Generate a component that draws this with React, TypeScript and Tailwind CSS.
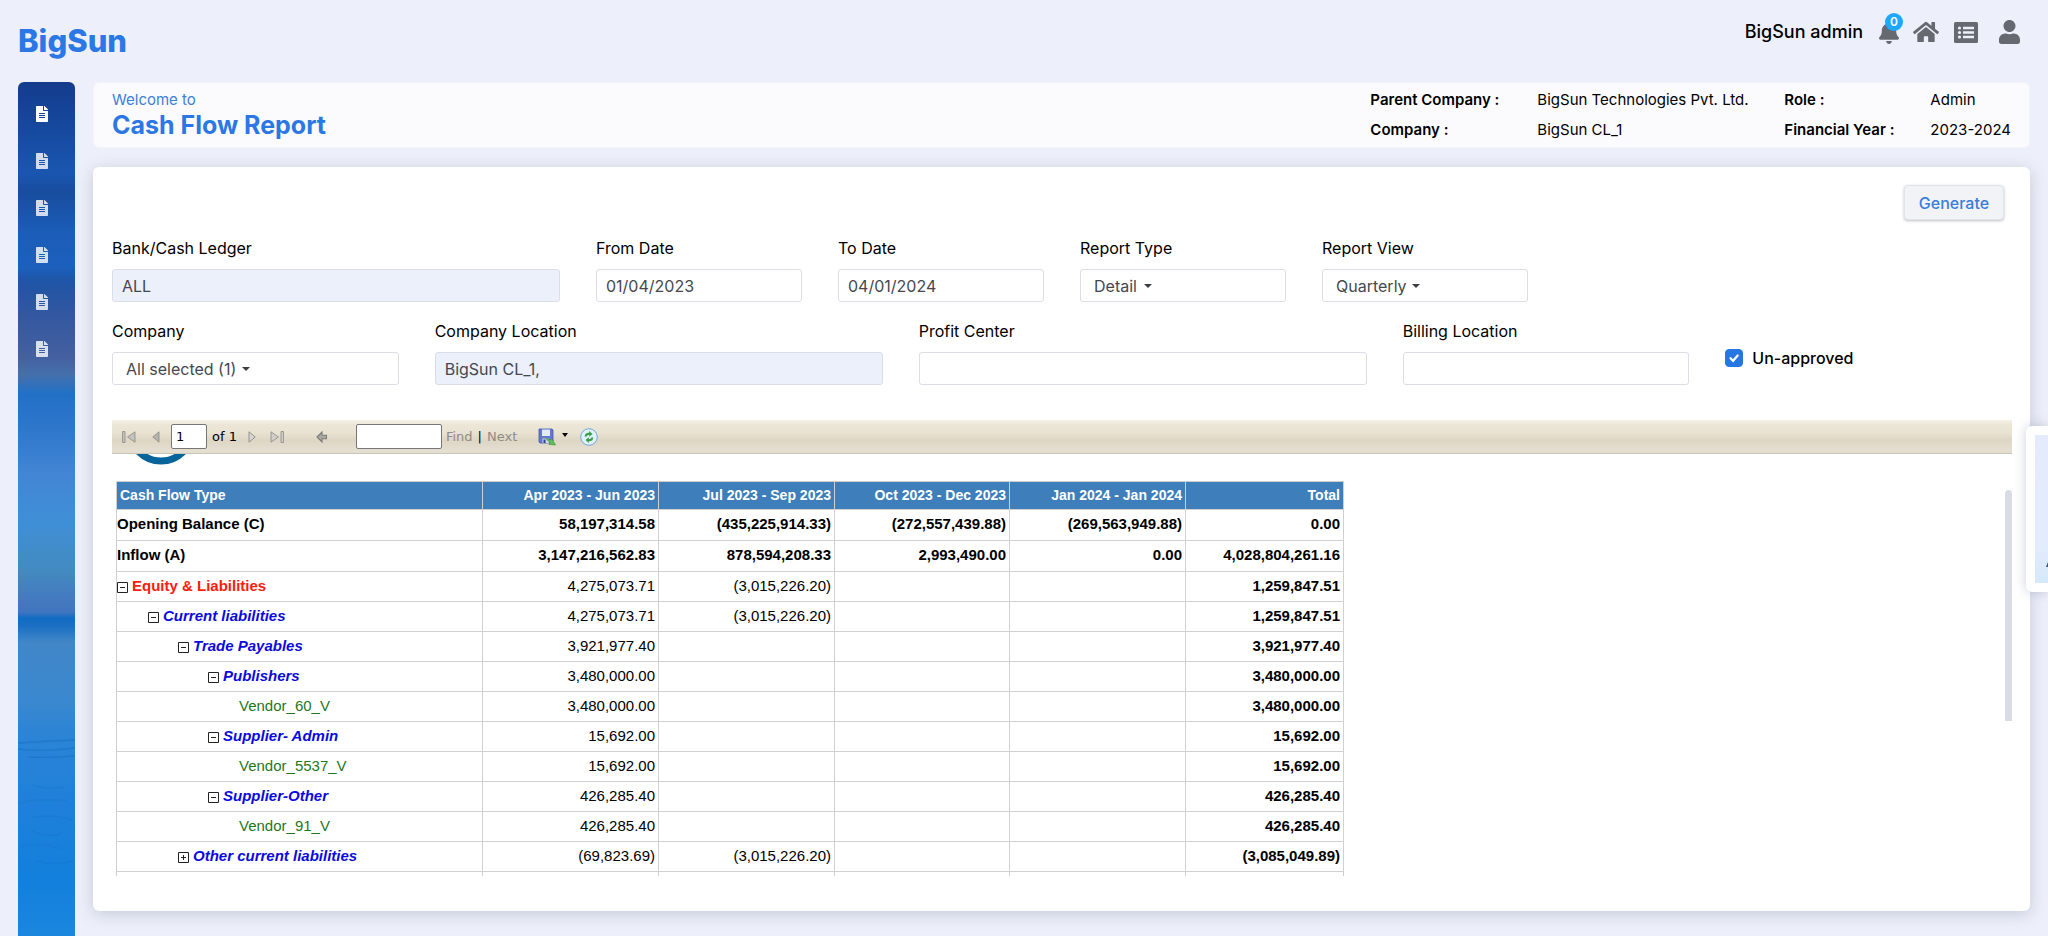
import { FaBell, FaFileAlt, FaHome, FaUser } from 'react-icons/fa';

type Level = 'total' | 'group' | 'sub' | 'vendor';

interface ReportRow {
  name: string;
  level: Level;
  indent?: string;
  open?: boolean;
  values: string[];
}

const columns = [
  'Apr 2023 - Jun 2023',
  'Jul 2023 - Sep 2023',
  'Oct 2023 - Dec 2023',
  'Jan 2024 - Jan 2024',
  'Total',
];

const rows: ReportRow[] = [
  { name: 'Opening Balance (C)', level: 'total', values: ['58,197,314.58', '(435,225,914.33)', '(272,557,439.88)', '(269,563,949.88)', '0.00'] },
  { name: 'Inflow (A)', level: 'total', values: ['3,147,216,562.83', '878,594,208.33', '2,993,490.00', '0.00', '4,028,804,261.16'] },
  { name: 'Equity & Liabilities', level: 'group', open: true, values: ['4,275,073.71', '(3,015,226.20)', '', '', '1,259,847.51'] },
  { name: 'Current liabilities', level: 'sub', indent: 'pl-[31px]', open: true, values: ['4,275,073.71', '(3,015,226.20)', '', '', '1,259,847.51'] },
  { name: 'Trade Payables', level: 'sub', indent: 'pl-[61px]', open: true, values: ['3,921,977.40', '', '', '', '3,921,977.40'] },
  { name: 'Publishers', level: 'sub', indent: 'pl-[91px]', open: true, values: ['3,480,000.00', '', '', '', '3,480,000.00'] },
  { name: 'Vendor_60_V', level: 'vendor', indent: 'pl-[122px]', values: ['3,480,000.00', '', '', '', '3,480,000.00'] },
  { name: 'Supplier- Admin', level: 'sub', indent: 'pl-[91px]', open: true, values: ['15,692.00', '', '', '', '15,692.00'] },
  { name: 'Vendor_5537_V', level: 'vendor', indent: 'pl-[122px]', values: ['15,692.00', '', '', '', '15,692.00'] },
  { name: 'Supplier-Other', level: 'sub', indent: 'pl-[91px]', open: true, values: ['426,285.40', '', '', '', '426,285.40'] },
  { name: 'Vendor_91_V', level: 'vendor', indent: 'pl-[122px]', values: ['426,285.40', '', '', '', '426,285.40'] },
  { name: 'Other current liabilities', level: 'sub', indent: 'pl-[61px]', open: false, values: ['(69,823.69)', '(3,015,226.20)', '', '', '(3,085,049.89)'] },
];

const nameStyles: Record<Level, string> = {
  total: 'font-bold text-black',
  group: 'font-bold text-[#fb1c0c]',
  sub: 'font-bold italic text-[#0a0ae0]',
  vendor: 'text-[#1e781e]',
};

const fieldBox =
  'block h-[33px] w-full rounded-[3px] border border-[#dcdde6] px-[9px] text-base text-[#45484f] outline-none';

const TextField = ({ id, label, value = '', span, filled = false }: { id: string; label: string; value?: string; span: string; filled?: boolean }) => (
  <div className={span}>
    <label htmlFor={id} className="mb-[9px] block text-base leading-6 text-black">
      {label}
    </label>
    <input id={id} type="text" defaultValue={value} className={`${fieldBox} ${filled ? 'bg-[#ebf0fb]' : 'bg-white'}`} />
  </div>
);

const SelectField = ({ id, label, value, span, caret }: { id: string; label: string; value: string; span: string; caret: string }) => (
  <div className={span}>
    <label htmlFor={id} className="mb-[9px] block text-base leading-6 text-black">
      {label}
    </label>
    <div className="relative">
      <select id={id} className={`${fieldBox} appearance-none bg-white pl-[13px]`}>
        <option>{value}</option>
      </select>
      <svg viewBox="0 0 8 4" className={`pointer-events-none absolute top-[15px] h-1 w-2 ${caret}`}>
        <path d="M0 0h8L4 4z" fill="#3a3d44" />
      </svg>
    </div>
  </div>
);

const Toggle = ({ open }: { open: boolean }) => (
  <button type="button" aria-label={open ? 'Collapse' : 'Expand'} className="mr-1 inline-block align-[-2px]">
    <svg viewBox="0 0 11 11" className="h-[11px] w-[11px]" fill="none" stroke="#222">
      <path d="M.5.5h10v10H.5z M3 5.500h5" />
      {!open && <path d="M5.500 3v5" />}
    </svg>
  </button>
);

const Sidebar = () => (
  <nav className="w-[57px] shrink-0 rounded-t-md bg-[linear-gradient(180deg,#143c8c_0px,#15479c_40px,#1a56b0_90px,#184d9f_110px,#1b5db8_150px,#1c60bd_185px,#1f54a5_200px,#3458a0_235px,#44609f_275px,#4570ab_292px,#2270c6_312px,#2f78cc_350px,#4285d4_390px,#3f8fd6_440px,#438ac0_490px,#4478bf_520px,#4076bf_530px,#126bc2_536px,#1b6fc4_544px,#4187c8_560px,#3a88cf_620px,#2b84d6_655px,#1f80da_720px,#1280dc_800px,#1c86df_854px)]">
    <ul className="flex flex-col items-center gap-[31px] pr-[9px] pt-6">
      {[0, 1, 2, 3, 4, 5].map((item) => (
        <li key={item} className="h-4">
          <a href="#report" aria-label="Report" className={item === 0 ? 'text-white' : 'text-white/80'}>
            <FaFileAlt className="h-4 w-[12px]" />
          </a>
        </li>
      ))}
    </ul>
    {/* faint water ripples near the bottom */}
    <svg viewBox="0 0 57 140" className="mt-[382px] h-[140px] w-[57px]" fill="none" stroke="#1569ba" strokeOpacity=".4" strokeWidth="1.500">
      <path d="M0 4q28 -2 57 -3M0 10q24 3 57 -1M10 18q20 1 47 -1" />
      <path strokeOpacity=".2" d="M14 46q18 5 33 2M0 64q24 -6 48 -2M15 78q18 -3 40 3M14 92q16 8 30 2M2 108q22 -6 40 2M18 122q18 5 38 0" />
    </svg>
  </nav>
);

const ReportToolbar = () => (
  <div className="flex h-[34px] items-center border-b border-[#c9c6ba] bg-[linear-gradient(180deg,#f4f2e8_0%,#ebe6d6_14%,#e8e2d1_40%,#ddd6c4_62%,#e4ded0_90%)] pl-[10px] text-[13px] text-black [font-family:'DejaVu_Sans',sans-serif]">
    <button type="button" aria-label="First page" className="w-[14px]">
      <svg viewBox="0 0 14 12" className="h-3 w-[14px]" fill="#c4c2bd" stroke="#8e8c87" strokeWidth=".8">
        <path d="M.5.5h2.500v11h-2.500z M13 .8v10.400L5.500 6z" />
      </svg>
    </button>
    <button type="button" aria-label="Previous page" className="ml-4 w-2">
      <svg viewBox="0 0 8 12" className="h-3 w-2" fill="#b5b3ae" stroke="#8e8c87" strokeWidth=".8">
        <path d="M7 .8v10.400L.8 6z" />
      </svg>
    </button>
    <input aria-label="Current page" defaultValue="1" className="ml-[11px] h-[25px] w-[36px] rounded-[2px] border border-[#767676] bg-white px-1 text-[13px]" />
    <span className="ml-[5px]">of 1</span>
    <button type="button" aria-label="Next page" className="ml-[11px] w-2">
      <svg viewBox="0 0 8 12" className="h-3 w-2" fill="#d8d6d0" stroke="#8e8c87" strokeWidth=".9">
        <path d="M1 .8v10.400L7.200 6z" />
      </svg>
    </button>
    <button type="button" aria-label="Last page" className="ml-[14px] w-[14px]">
      <svg viewBox="0 0 14 12" className="h-3 w-[14px]" fill="#d0cec8" stroke="#8e8c87" strokeWidth=".8">
        <path d="M11 .5h2.500v11H11z M1 .8v10.400L8.500 6z" />
      </svg>
    </button>
    <button type="button" aria-label="Back" className="ml-[32px] w-[12px]">
      <svg viewBox="0 0 12 12" className="h-3 w-3" fill="#aaa8a3" stroke="#7d7b76" strokeWidth="1.100">
        <path d="M1 6l5-5v3.200h4.500v3.600H6V11z" />
      </svg>
    </button>
    <input aria-label="Find text" className="ml-[28px] h-[25px] w-[86px] rounded-[2px] border border-[#767676] bg-white px-1" />
    <div className="ml-1 flex gap-[5px] text-[#8f8c84]">
      <button type="button">Find</button>
      <span className="text-black">|</span>
      <button type="button">Next</button>
    </div>
    <button type="button" aria-label="Export" className="ml-[21px] flex items-center gap-[6px]">
      <svg viewBox="0 0 18 18" className="h-[18px] w-[18px]">
        <path d="M1 1h13l1 1v13H2l-1-1z" fill="#6478d2" stroke="#4557b0" strokeWidth=".8" />
        <path d="M4 1.500h8v6.500H4z" fill="#e3ebfa" />
        <path d="M4.500 10.500h6.500V15H4.500z" fill="#cdd6ee" />
        <path d="M5.500 11.500h2V15h-2z" fill="#33418a" />
        <path d="M8 10.500c2 .2 3 .8 4.200 1.800l1.600-1.600 3.700 6.300-6.600-.6 1.400-1.400C11 13.500 9.500 12.500 8 10.500z" fill="#5fc254" stroke="#3a8f38" strokeWidth=".6" />
      </svg>
      <svg viewBox="0 0 6 4" className="mb-1 h-1 w-[6px]">
        <path d="M0 0h6L3 4z" fill="#000" />
      </svg>
    </button>
    <button type="button" aria-label="Refresh" className="ml-[12px]">
      <svg viewBox="0 0 18 18" className="h-[18px] w-[18px]">
        <circle cx="9" cy="9" r="8.300" fill="#dff1fb" stroke="#6ea9dc" />
        <path d="M4.600 8.500c.2-2.300 2-4 4.600-3.700V3l3.300 3-3.300 2.700V7C7.800 6.800 7 7.400 6.800 8.500z" fill="#3c9e46" />
        <path d="M13.400 9.500c-.2 2.300-2 4-4.600 3.700V15l-3.300-3 3.300-2.700V11c1.400.2 2.200-.4 2.400-1.500z" fill="#3c9e46" />
      </svg>
    </button>
  </div>
);

const ReportTable = () => (
  <table className="ml-1 w-[1227px] table-fixed border-collapse text-[15px] leading-4 text-black [font-family:'Liberation_Sans',Arial,sans-serif]">
    <colgroup>
      <col className="w-[366px]" />
      <col className="w-[176px]" />
      <col className="w-[176px]" />
      <col className="w-[175px]" />
      <col className="w-[176px]" />
      <col className="w-[158px]" />
    </colgroup>
    <thead>
      <tr className="h-7 bg-[#3e7fbb] text-sm leading-4 text-white">
        <th className="border border-[#cfcfd4] pb-[2px] pl-[3px] text-left">Cash Flow Type</th>
        {columns.map((column) => (
          <th key={column} className="border border-[#cfcfd4] pb-[2px] pr-[3px] text-right">
            {column}
          </th>
        ))}
      </tr>
    </thead>
    <tbody>
      {rows.map((row) => (
        <tr key={row.name} className={row.level === 'total' ? 'h-[31px]' : 'h-[30px]'}>
          <td className={`border border-[#cfcfd4] pb-[2px] ${row.indent ?? ''} ${nameStyles[row.level]}`}>
            {row.open !== undefined && <Toggle open={row.open} />}
            {row.name}
          </td>
          {row.values.map((value, i) => (
            <td
              key={columns[i]}
              className={`border border-[#cfcfd4] pb-[2px] pr-[3px] text-right ${row.level === 'total' || i === 4 ? 'font-bold' : ''}`}
            >
              {value}
            </td>
          ))}
        </tr>
      ))}
      <tr className="h-[30px]">
        {['name', ...columns].map((column) => (
          <td key={column} className="border border-[#cfcfd4]" />
        ))}
      </tr>
    </tbody>
  </table>
);

const App = () => {
  return (
    <div className="relative flex h-screen flex-col overflow-hidden bg-[#edf0fa] [font-family:Inter,sans-serif]">
      <header className="flex h-[82px] shrink-0 items-start justify-between pl-[18px] pr-7">
        <a href="#home" className="mt-[22px] text-[31px] font-extrabold leading-[38px] text-[#2b77e5]">
          BigSun
        </a>
        <div className="mt-4 flex h-8 items-center text-[#666970]">
          <span className="text-lg font-medium text-black">BigSun admin</span>
          <button type="button" aria-label="Notifications" className="relative ml-4">
            <FaBell className="h-[23px] w-[20px]" />
            <span className="absolute -top-[8px] left-[6px] flex h-[18px] w-[18px] items-center justify-center rounded-full bg-[#1ea7fd] text-xs font-semibold text-white">
              0
            </span>
          </button>
          <a href="#home" aria-label="Home" className="ml-[14px]">
            <FaHome className="h-[26px] w-[26px]" />
          </a>
          <a href="#list" aria-label="List" className="ml-[15px]">
            <svg viewBox="0 0 24 21" className="h-[21px] w-6">
              <rect width="24" height="21" rx="1.500" fill="currentColor" />
              <g fill="#edf0fa">
                <circle cx="5.500" cy="6" r="1.600" />
                <circle cx="5.500" cy="10.500" r="1.600" />
                <circle cx="5.500" cy="15" r="1.600" />
                <path d="M9 4.800h11v2.400H9zM9 9.300h11v2.400H9zM9 13.800h11v2.400H9z" />
              </g>
            </svg>
          </a>
          <a href="#profile" aria-label="Profile" className="ml-[21px]">
            <FaUser className="h-6 w-[21px]" />
          </a>
        </div>
      </header>

      <div className="flex min-h-0 flex-1 pl-[18px] pr-[18px]">
        <Sidebar />
        <main className="ml-[18px] flex min-w-0 flex-1 flex-col">
          <section className="flex h-[66px] shrink-0 items-center justify-between rounded-md border border-[#f3f4fc] bg-[#fbfbfe] pl-[18px] pr-[18px]">
            <div>
              <p className="text-[15px] leading-5 text-[#3d7edb]">Welcome to</p>
              <h1 className="text-[25px] font-bold leading-[30px] text-[#2b77e5]">Cash Flow Report</h1>
            </div>
            <dl className="grid grid-cols-[167px_247px_146px_auto] gap-y-[10px] text-[15px] leading-5 text-black">
              <dt className="font-semibold">Parent Company :</dt>
              <dd>BigSun Technologies Pvt. Ltd.</dd>
              <dt className="font-semibold">Role :</dt>
              <dd>Admin</dd>
              <dt className="font-semibold">Company :</dt>
              <dd>BigSun CL_1</dd>
              <dt className="font-semibold">Financial Year :</dt>
              <dd>2023-2024</dd>
            </dl>
          </section>

          <section className="mb-[25px] mt-[19px] flex min-h-0 flex-1 flex-col rounded-md bg-white pb-[35px] pl-[19px] pr-[18px] pt-[18px] shadow-[0_3px_16px_rgba(90,100,130,0.28)]">
            <button type="button" className="mr-2 h-[35px] w-[100px] shrink-0 self-end rounded-[4px] border border-[#e3e4ea] bg-[#f2f3f7] text-base font-medium text-[#3b7ddd] shadow-[0_1px_3px_rgba(0,0,0,0.25)]">
              Generate
            </button>

            <form className="mt-[16px] grid shrink-0 grid-cols-24 gap-x-9 gap-y-[17px]">
              <TextField id="ledger" label="Bank/Cash Ledger" value="ALL" span="col-span-6" filled />
              <TextField id="from" label="From Date" value="01/04/2023" span="col-span-3" />
              <TextField id="to" label="To Date" value="04/01/2024" span="col-span-3" />
              <SelectField id="type" label="Report Type" value="Detail" span="col-span-3" caret="left-[64px]" />
              <SelectField id="view" label="Report View" value="Quarterly" span="col-span-3" caret="left-[90px]" />
              <SelectField id="company" label="Company" value="All selected (1)" span="col-span-4 col-start-1" caret="left-[130px]" />
              <TextField id="location" label="Company Location" value="BigSun CL_1," span="col-span-6" filled />
              <TextField id="profit" label="Profit Center" span="col-span-6" />
              <TextField id="billing" label="Billing Location" span="col-span-4" />
              <div className="col-span-4 flex items-center gap-[9px] pt-[12px]">
                <div className="relative h-[18px] w-[18px]">
                  <input
                    id="unapproved"
                    type="checkbox"
                    defaultChecked
                    className="peer block h-[18px] w-[18px] appearance-none rounded-[4px] border border-[#c5c9d3] checked:border-[#2676e3] checked:bg-[#2676e3]"
                  />
                  <svg viewBox="0 0 18 18" className="pointer-events-none absolute inset-0 hidden h-[18px] w-[18px] peer-checked:block">
                    <path d="M5.500 9.200l2.600 2.600 4.600-5.300" fill="none" stroke="#fff" strokeWidth="2.200" strokeLinecap="round" />
                  </svg>
                </div>
                <label htmlFor="unapproved" className="text-base font-medium text-black">
                  Un-approved
                </label>
              </div>
            </form>

            <div className="mt-[35px] flex min-h-0 flex-1 flex-col">
              <ReportToolbar />
              <div className="relative min-h-0 flex-1 overflow-hidden">
                <svg viewBox="0 0 50 11" className="ml-6 h-[11px] w-[50px]">
                  <circle cx="25" cy="-24" r="31" fill="none" stroke="#06649b" strokeWidth="7" />
                </svg>
                <div className="mt-4">
                  <ReportTable />
                </div>
                <div className="absolute right-0 top-9 h-[231px] w-[7px] rounded-t bg-[#d9dce6]" />
              </div>
            </div>
          </section>
        </main>
      </div>

      <aside className="absolute right-0 top-[426px] h-[166px] w-[22px] overflow-hidden rounded-l-md bg-white py-[9px] pl-[9px] shadow-[0_0_12px_rgba(90,100,130,0.3)]">
        <div className="flex h-full items-end justify-end bg-[linear-gradient(180deg,#e4ebfd_0%,#e2ecfc_75%,#d4e9fa_100%)] pb-4">
          <svg viewBox="0 0 2 5" className="h-[5px] w-[2px]">
            <path d="M2 0v5H0z" fill="#3b4a8c" />
          </svg>
        </div>
      </aside>
    </div>
  );
};

export default App;
